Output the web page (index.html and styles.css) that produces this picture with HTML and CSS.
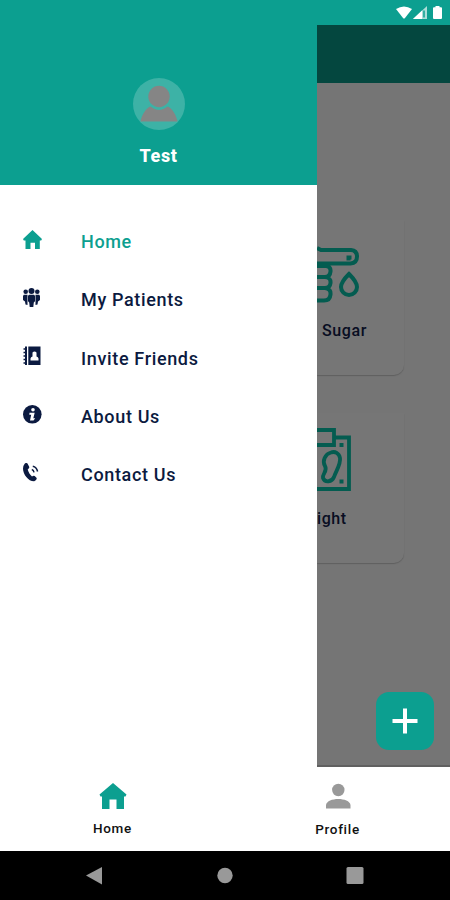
FILE: index.html
```html
<!DOCTYPE html>
<html lang="en">
<head>
<meta charset="utf-8">
<title>Home</title>
<link rel="stylesheet" href="styles.css">
</head>
<body>
<div class="phone">
  <header class="status">
    <svg width="48" height="16" viewBox="0 0 48 16" fill="#fff">
      <path d="M0 4Q8-1 16 4L9 13Q8 14 7 13Z"/>
      <path d="M17 14 31 1V14Z" opacity=".65"/><path d="M17 14 26 5.5V14Z"/><path d="M28 5.5V12.5" stroke="#0c9f90" stroke-width="1.5"/>
      <path d="M39.5 1h4v1.2H45q1 0 1 1V13q0 1-1 1h-7q-1 0-1-1V3.2q0-1 1-1h1.5Z"/>
    </svg>
  </header>
  <div class="body">
    <aside class="drawer">
      <div class="account">
        <svg class="avatar" width="52" height="52" viewBox="0 0 52 52">
          <circle cx="26" cy="26" r="26" fill="#3db2a6"/>
          <g fill="#858585"><circle cx="26" cy="18.500" r="10.700"/><path d="M7.500 43.500C9 36 13 30.500 17.500 28.200Q26 35 34.500 28.200C39 30.500 43 36 44.500 43.500Z"/></g>
          <path d="M16 26.500Q26 35.500 36 26.500" fill="none" stroke="#3db2a6" stroke-width="1.300"/>
        </svg>
        <div class="name">Test</div>
      </div>
      <nav class="menu">
        <a class="item active">
          <svg width="20" height="20" viewBox="0 0 20 20"><path d="M9.500 0 19 9 18.200 10.500H16.800V19H12V12.800H7.500V19H2.500V10.500H.8L0 9Z" fill="currentColor"/></svg>
          <span>Home</span>
        </a>
        <a class="item">
          <svg width="20" height="20" viewBox="0 0 20 20" fill="currentColor"><circle cx="2.700" cy="3.700" r="2.300"/><circle cx="14.300" cy="3.700" r="2.300"/><circle cx="8.500" cy="3" r="3"/><path d="M.8 6.700H4.500V17L2.500 16.500 2 13.500 0 12V8ZM12.500 6.700h3.700l.8 1.300v4L15 13.500l-.5 3-2 .5ZM6 6.700h5q1 .5 1 1.500v5L10.800 14.500 10.300 19H6.700L6.200 14.500 5 13.200V8.200Q5 7.200 6 6.700Z"/></svg>
          <span>My Patients</span>
        </a>
        <a class="item">
          <svg width="20" height="20" viewBox="0 0 20 20"><path d="M5.300.5H17.500V19H5.300ZM2 .5H4V19H2Z" fill="currentColor"/><path d="M.5 3H4M.5 6.500H4M.5 10H4M.5 13.500H4M.5 17H4" stroke="currentColor" stroke-width="1.300"/><path d="M7.500 14.500V12.500Q7.700 10.800 9.500 10.500V6.500Q11.500 4.500 13.500 6.500V10.500Q15.300 10.800 15.500 12.500V14.500Z" fill="#fff"/></svg>
          <span>Invite Friends</span>
        </a>
        <a class="item">
          <svg width="20" height="20" viewBox="0 0 20 20"><circle cx="9.300" cy="9.300" r="9.300" fill="currentColor"/><circle cx="10" cy="4.800" r="1.800" fill="#fff"/><path d="M6.500 7.700H11.700L10.300 13.300H12.200L10.500 15.500H7L8.200 9.700H6.300Z" fill="#fff"/></svg>
          <span>About Us</span>
        </a>
        <a class="item">
          <svg width="20" height="20" viewBox="0 0 20 20"><path d="M1.500 1Q3-.8 4.500.5L6.300 4Q6.500 5.200 4.700 6.500C5.500 9.500 7 11.500 9 13.500Q10.600 12.100 11.700 13L13.700 15Q14 17 11.200 18.300C5.500 18.500 0 11.500 0 5.500Q0 2.500 1.500 1Z" fill="currentColor"/><path d="M8.800 6.500Q10.700 7 11 9.300M9.800 3.200Q13.700 4 14.600 8.500" fill="none" stroke="currentColor" stroke-width="1.500"/></svg>
          <span>Contact Us</span>
        </a>
      </nav>
    </aside>
    <main class="page">
      <div class="appbar"></div>
      <section class="card">
        <svg width="43" height="60" viewBox="0 0 43 60" fill="none" stroke="#045c50" stroke-width="4">
          <path d="M0 2 4 4H34Q40 4.500 40 10.500Q40 17 33.500 17.500H0M31.500 14.500V11.500H34.500M0 20H9Q14 20.500 13.500 25.500 13 31 8 31H0M8 31Q14 31.500 13.500 37 13 42 8 42H0M8 42Q14 42.500 13.500 48.500 13 54.500 7 54.500H0M32 28Q24 36 24 41A8 8 0 0 0 40 41Q40 36 32 28Z"/>
        </svg>
        <div class="label">Sugar</div>
      </section>
      <section class="card second">
        <svg width="43" height="64" viewBox="0 0 43 64" fill="none" stroke="#045c50" stroke-width="3.800">
          <path d="M0 3H17V18H0M17 10.500H32V62H0"/><path d="M14 25.500C8 27 5 34 8 39C11 44 5 47 6 51C8 56 15 55 17 50C19 44 24 37 23 31C22 26 18 24 14 25.500Z"/><path d="M22.500 18h4M22.500 54.500h4"/>
        </svg>
        <div class="label">ight</div>
      </section>
      <button class="add" aria-label="Add"><svg width="26" height="26" viewBox="0 0 26 26"><path d="M13 .5V25.500M.5 13H25.500" stroke="#fff" stroke-width="4"/></svg></button>
    </main>
  </div>
  <nav class="tabs">
    <a class="tab"><svg width="28" height="28" viewBox="0 0 28 28"><path d="M14 1 27.500 12.500 26.500 14.500H25V27H17.500V17.500H10.500V27H3V14.500H1.500L.5 12.500Z" fill="#0c9f90"/></svg><span>Home</span></a>
    <a class="tab profile"><svg width="28" height="28" viewBox="0 0 28 28" fill="#999"><circle cx="14.300" cy="8" r="6.200"/><path d="M2 26.500V23C3 15 25.500 15 26.500 23V26.500Z"/></svg><span>Profile</span></a>
  </nav>
  <footer class="system">
    <svg width="18" height="20" viewBox="0 0 18 20"><path d="M0 9.500 16 1V18.500Z" fill="#999"/></svg>
    <svg width="18" height="20" viewBox="0 0 18 20"><circle cx="9" cy="9.500" r="7.700" fill="#999"/></svg>
    <svg width="18" height="20" viewBox="0 0 18 20"><rect x=".5" y="1" width="17" height="17" rx="1.500" fill="#999"/></svg>
  </footer>
</div>
</body>
</html>
```
FILE: styles.css
```css
* { box-sizing: border-box; }
body { margin: 0; font-family: Roboto, sans-serif; color: #0b1a40; }
.phone { width: 450px; height: 900px; display: flex; flex-direction: column; background: #fff; overflow: hidden; }
.status { height: 25px; flex: none; background: #0c9f90; display: flex; justify-content: flex-end; align-items: flex-start; padding: 5px 6px 0 0; }
.body { height: 742px; flex: none; display: grid; grid-template-columns: 317px 133px; }
.account { height: 160px; background: #0c9f90; display: flex; flex-direction: column; align-items: center; padding-top: 53px; }
.avatar { display: block; }
.name { margin-top: 15px; line-height: 22px; font-size: 18px; font-weight: 800; letter-spacing: .6px; color: #fff; }
.menu { padding: 28px 0 0 23px; }
.item { height: 58.300px; display: flex; align-items: center; }
.item svg { width: 20px; height: 20px; margin: -5px 38px 0 0; flex: none; }
.item span { font-size: 18px; line-height: 24px; font-weight: 500; letter-spacing: .65px; }
.item.active { color: #0c9f90; }
.page { background: #757575; display: flex; flex-direction: column; overflow: hidden; border-bottom: 2px solid #606060; }
.appbar { height: 58px; flex: none; background: #04473f; }
.card { width: 87px; height: 155px; flex: none; margin-top: 137px; padding-top: 26px; border-radius: 0 0 10px 0; background: #767676; box-shadow: 0 1px 1px #606060; }
.card svg { display: block; }
.label { margin: 15px 0 0 5px; font-size: 16px; line-height: 20px; font-weight: 500; letter-spacing: .6px; color: #080d22; }
.card.second { margin-top: 38px; height: 150px; padding-top: 14px; }
.second .label { margin: 18px 0 0 0; }
.add { width: 58px; height: 58px; flex: none; margin: auto 16px 15px auto; border: 0; border-radius: 13px; background: #0c9f90; display: flex; align-items: center; justify-content: center; padding: 0; }
.tabs { height: 84px; flex: none; display: grid; grid-template-columns: 1fr 1fr; color: #111; }
.tab { display: flex; flex-direction: column; align-items: center; padding-top: 15px; }
.tab span { margin-top: 10px; font-size: 13.500px; line-height: 16px; font-weight: 500; letter-spacing: .7px; }
.tab.profile span { margin-top: 11px; }
.system { flex: 1; background: #000; display: flex; justify-content: space-between; align-items: center; padding: 0 86px; }
```
